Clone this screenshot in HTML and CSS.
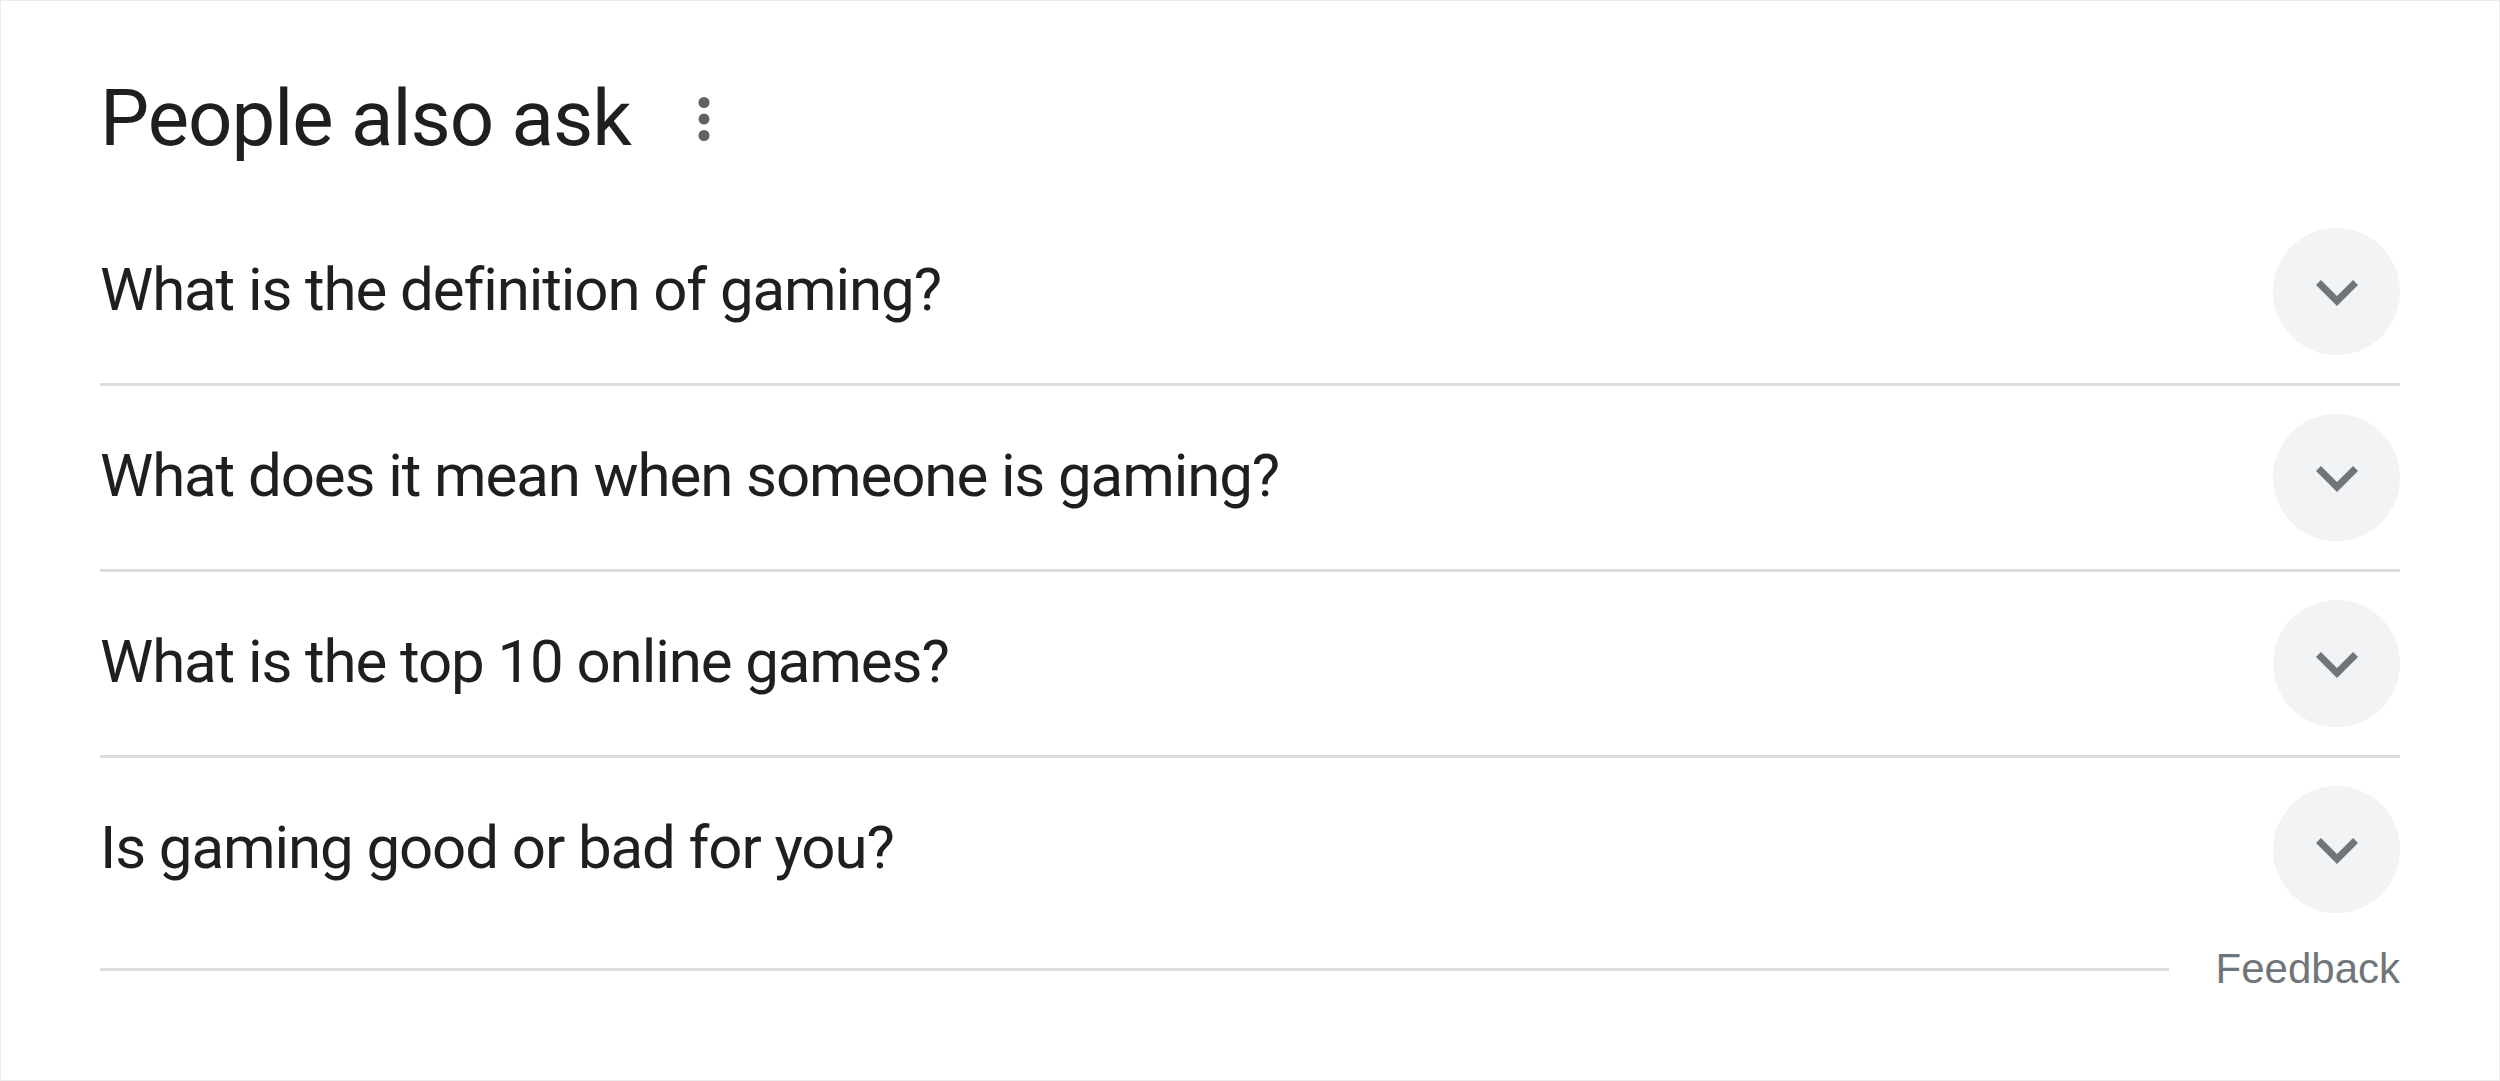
FILE: index.html
```html
<!DOCTYPE html>
<html lang="en">
<head>
<meta charset="utf-8">
<title>People also ask</title>
<link rel="stylesheet" href="styles.css">
</head>
<body>
<div class="frame">
  <section class="paa">
    <header class="paa-header">
      <h2 class="paa-title">People also ask</h2>
      <span class="more-btn" aria-label="More options">
        <svg viewBox="0 0 24 24" class="more-icon"><circle cx="12" cy="6" r="2"/><circle cx="12" cy="12" r="2"/><circle cx="12" cy="18" r="2"/></svg>
      </span>
    </header>
    <div class="paa-list">
      <div class="paa-row">
        <span class="q">What is the definition of gaming?</span>
        <span class="expand"><svg viewBox="0 0 24 24" class="chev"><path d="M16.59 8.59L12 13.17 7.41 8.59 6 10l6 6 6-6z"/></svg></span>
      </div>
      <div class="paa-row">
        <span class="q">What does it mean when someone is gaming?</span>
        <span class="expand"><svg viewBox="0 0 24 24" class="chev"><path d="M16.59 8.59L12 13.17 7.41 8.59 6 10l6 6 6-6z"/></svg></span>
      </div>
      <div class="paa-row">
        <span class="q">What is the top 10 online games?</span>
        <span class="expand"><svg viewBox="0 0 24 24" class="chev"><path d="M16.59 8.59L12 13.17 7.41 8.59 6 10l6 6 6-6z"/></svg></span>
      </div>
      <div class="paa-row last">
        <span class="q">Is gaming good or bad for you?</span>
        <span class="expand"><svg viewBox="0 0 24 24" class="chev"><path d="M16.59 8.59L12 13.17 7.41 8.59 6 10l6 6 6-6z"/></svg></span>
      </div>
    </div>
    <footer class="feedback-row">
      <span class="rule"></span>
      <span class="feedback">Feedback</span>
    </footer>
  </section>
</div>
</body>
</html>
```
FILE: styles.css
```css
html, body {
  margin: 0;
  padding: 0;
  background: #ffffff;
}

.frame {
  box-sizing: border-box;
  width: 2500px;
  height: 1081px;
  border: 1px solid #ececec;
  padding: 37px 99px 0 99px;
}

.paa {
  font-family: Roboto, "Liberation Sans", Arial, sans-serif;
  color: #1f1f1f;
}

.paa-header {
  display: flex;
  align-items: center;
  height: 162px;
}

.paa-title {
  margin: 0;
  font-weight: 400;
  font-size: 78px;
  line-height: 1;
  letter-spacing: -1px;
}

.more-btn {
  display: flex;
  margin-left: 40px;
}

.more-icon {
  width: 66px;
  height: 66px;
  fill: #5f6368;
}

.paa-row {
  display: flex;
  align-items: center;
  justify-content: space-between;
  height: 183px;
  border-bottom: 3px solid #dadce0;
}

.paa-row.last {
  border-bottom: none;
}

.q {
  font-size: 60px;
  line-height: 1;
  letter-spacing: -1.1px;
  margin-top: -4px;
}

.expand {
  display: flex;
  align-items: center;
  justify-content: center;
  width: 127px;
  height: 127px;
  border-radius: 50%;
  background: #f1f3f4;
}

.chev {
  width: 84px;
  height: 84px;
  fill: #70757a;
}

.feedback-row {
  display: flex;
  align-items: center;
  gap: 47px;
  height: 56px;
}

.rule {
  flex: 1;
  height: 3px;
  background: #dadce0;
}

.feedback {
  font-family: "Liberation Sans", Arial, sans-serif;
  font-size: 42px;
  color: #70757a;
}
```
